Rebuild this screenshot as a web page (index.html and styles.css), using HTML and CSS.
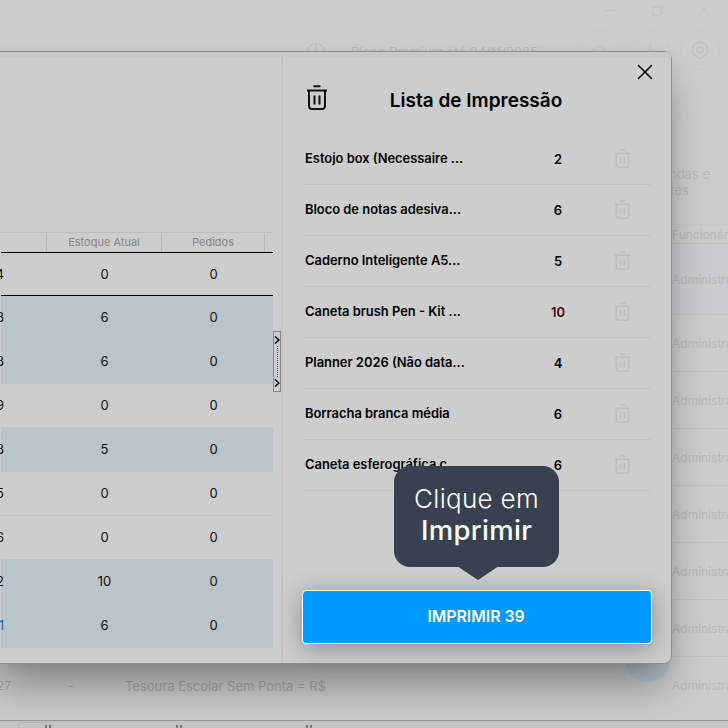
FILE: index.html
```html
<!DOCTYPE html>
<html lang="pt-BR">
<head>
<meta charset="utf-8">
<title>Lista de Impressão</title>
<link rel="stylesheet" href="styles.css">
</head>
<body>
<svg class="defs" width="0" height="0" aria-hidden="true">
  <symbol id="trash" viewBox="0 0 22 25">
    <path d="M7.5 1.2h7M1 5.5h20M3 5.5V21a3 3 0 0 0 3 3h10a3 3 0 0 0 3-3V5.500M8.500 10.500v9M13.500 10.500v9" fill="none" stroke="currentColor" stroke-width="2"/>
  </symbol>
</svg>

<div class="app">
  <div class="winbar">
    <span class="win-min"></span>
    <svg class="win-max" width="11" height="11" viewBox="0 0 11 11"><path d="M.5 2.500h8v8h-8zM2.500 2.500V.5h8v8H8.500" fill="none" stroke="#c2c2c2"/></svg>
    <svg class="win-close" width="12" height="12" viewBox="0 0 12 12"><path d="M1 1l10 10M11 1L1 11" stroke="#c2c2c2" fill="none"/></svg>
  </div>
  <div class="toolbar">
    <svg class="net" width="20" height="20" viewBox="0 0 20 20"><circle cx="10" cy="10" r="8.500" fill="none" stroke="#b8b8b8"/><path d="M10 2v8M10 10l-7 5M10 10l7 5" stroke="#b8b8b8"/></svg>
    <span class="plan">Plano Premium até 04/11/2025</span>
    <span class="tool-circle">
      <svg class="tool-icon" width="20" height="20" viewBox="0 0 20 20"><path d="M3 14a4 4 0 0 1 1-7.500 6 6 0 0 1 11 1 3.500 3.500 0 0 1 1 6.500" fill="none" stroke="#c4c4c4" stroke-width="1.500"/></svg>
    </span>
    <span class="tool-circle">
      <svg class="tool-icon" width="20" height="20" viewBox="0 0 20 20"><path d="M10 2c-1 3-3 5-3 9h6c0-4-2-6-3-9z" fill="none" stroke="#c4c4c4" stroke-width="1.500"/></svg>
    </span>
    <span class="tool-circle">
      <svg width="20" height="20" viewBox="0 0 20 20"><path d="M10 1.500l7 4.200v8.600l-7 4.200-7-4.200V5.700z" fill="none" stroke="#c0c0c0" stroke-width="1.500" stroke-linejoin="round"/><circle cx="10" cy="10" r="3" fill="none" stroke="#c0c0c0" stroke-width="1.500"/></svg>
    </span>
  </div>
  <div class="bg-heading"><span>Comandas e</span><span>Gerentes</span></div>
  <div class="bg-row bg-head"><span class="bg-cell">Funcionário</span></div>
  <div class="bg-row bg-tall"><span class="bg-cell">Administrador</span></div>
  <div class="bg-row"><span class="bg-cell">Administrador</span></div>
  <div class="bg-row"><span class="bg-cell">Administrador</span></div>
  <div class="bg-row"><span class="bg-cell">Administrador</span></div>
  <div class="bg-row"><span class="bg-cell">Administrador</span></div>
  <div class="bg-row"><span class="bg-cell">Administrador</span></div>
  <div class="bg-row"><span class="bg-cell">Administrador</span></div>
  <div class="bg-row bg-last">
    <span class="bg-code">27</span>
    <span class="bg-dash">-</span>
    <span class="bg-name">Tesoura Escolar Sem Ponta = R$</span>
    <span class="bg-cell">Administrador</span>
  </div>
  <div class="footer">
    <span class="foot-pill"><span class="foot-mark"></span></span>
    <span class="foot-mark"></span>
    <span class="foot-mark"></span>
  </div>
</div>

<div class="chat-bubble"></div>

<section class="modal">
  <div class="modal-strip"></div>
  <div class="modal-body">
    <div class="left-panel">
      <div class="table">
        <div class="thead">
          <span class="th"></span>
          <span class="th">Estoque Atual</span>
          <span class="th">Pedidos</span>
          <span class="th th-last"></span>
        </div>
        <div class="tr tr-first"><span class="td td-id">34</span><span class="td">0</span><span class="td">0</span></div>
        <div class="tr sel"><span class="td td-id">48</span><span class="td">6</span><span class="td">0</span></div>
        <div class="tr sel"><span class="td td-id">48</span><span class="td">6</span><span class="td">0</span></div>
        <div class="tr"><span class="td td-id">49</span><span class="td">0</span><span class="td">0</span></div>
        <div class="tr sel"><span class="td td-id">38</span><span class="td">5</span><span class="td">0</span></div>
        <div class="tr"><span class="td td-id">35</span><span class="td">0</span><span class="td">0</span></div>
        <div class="tr"><span class="td td-id">36</span><span class="td">0</span><span class="td">0</span></div>
        <div class="tr sel"><span class="td td-id">42</span><span class="td">10</span><span class="td">0</span></div>
        <div class="tr sel"><span class="td td-id td-link">41</span><span class="td">6</span><span class="td">0</span></div>
      </div>
      <div class="splitter">
        <svg width="6" height="8" viewBox="0 0 6 8"><path d="M1 .5L5 4 1 7.500" fill="none" stroke="#000" stroke-width="1.500"/></svg>
        <span class="splitter-dots"></span>
        <svg width="6" height="8" viewBox="0 0 6 8"><path d="M1 .5L5 4 1 7.500" fill="none" stroke="#000" stroke-width="1.500"/></svg>
      </div>
    </div>
    <div class="right-panel">
      <svg class="close" width="16" height="16" viewBox="0 0 16 16"><path d="M1 1l14 14M15 1L1 15" fill="none" stroke="#000" stroke-width="1.500"/></svg>
      <header class="list-head">
        <svg class="trash-main" width="22" height="25"><use href="#trash"/></svg>
        <h1 class="list-title">Lista de Impressão</h1>
      </header>
      <ul class="list">
        <li class="item"><span class="item-name">Estojo box (Necessaire ...</span><span class="item-qty">2</span><svg class="trash-item" width="17" height="19"><use href="#trash"/></svg></li>
        <li class="item"><span class="item-name">Bloco de notas adesiva...</span><span class="item-qty">6</span><svg class="trash-item" width="17" height="19"><use href="#trash"/></svg></li>
        <li class="item"><span class="item-name">Caderno Inteligente A5...</span><span class="item-qty">5</span><svg class="trash-item" width="17" height="19"><use href="#trash"/></svg></li>
        <li class="item"><span class="item-name">Caneta brush Pen - Kit ...</span><span class="item-qty qty-high">10</span><svg class="trash-item" width="17" height="19"><use href="#trash"/></svg></li>
        <li class="item"><span class="item-name">Planner 2026 (Não data...</span><span class="item-qty">4</span><svg class="trash-item" width="17" height="19"><use href="#trash"/></svg></li>
        <li class="item"><span class="item-name">Borracha branca média</span><span class="item-qty">6</span><svg class="trash-item" width="17" height="19"><use href="#trash"/></svg></li>
        <li class="item"><span class="item-name">Caneta esferográfica c...</span><span class="item-qty">6</span><svg class="trash-item" width="17" height="19"><use href="#trash"/></svg></li>
      </ul>
      <button class="print-btn" type="button">IMPRIMIR 39</button>
      <div class="tooltip">
        <span class="tip-light">Clique em</span>
        <span class="tip-strong">Imprimir</span>
      </div>
    </div>
  </div>
</section>
</body>
</html>
```

FILE: styles.css
```css
* { box-sizing: border-box; }
html, body { margin: 0; padding: 0; }
body {
  position: relative;
  width: 728px;
  height: 728px;
  overflow: hidden;
  background: #cccccc;
  font-family: "Inter", "Liberation Sans", sans-serif;
  color: #000;
}
.defs { position: absolute; }

/* dimmed application behind the modal */
.app { display: flex; flex-direction: column; height: 728px; }
.winbar { display: flex; align-items: center; justify-content: flex-end; height: 20px; flex: none; padding-right: 18px; }
.win-min { width: 10px; height: 1px; background: #c2c2c2; margin-right: 38px; }
.win-max { margin-right: 35px; }
.toolbar { display: flex; align-items: center; height: 60px; flex: none; padding: 0 8px 0 306px; }
.net { margin: 4px 25px 0 0; flex: none; }
.plan { font-size: 13px; color: #b6b6b6; margin: 4px auto 0 0; white-space: nowrap; }
.tool-circle { width: 40px; height: 40px; border: 1px solid #c9c9c9; border-radius: 50%; margin-left: 10px; display: flex; align-items: center; justify-content: center; flex: none; }
.tool-icon { margin-top: 6px; }
.bg-heading { display: flex; flex-direction: column; margin: 86px 0 0 633px; height: 58px; font-size: 13px; line-height: 16px; color: #b8b8b8; white-space: nowrap; flex: none; }
.bg-row { display: flex; align-items: center; justify-content: flex-end; height: 57px; border-bottom: 1px solid #c4c0be; flex: none; }
.bg-head { height: 20px; border-top: 1px solid #c8c8c8; border-bottom: 1px solid #bdb9b7; }
.bg-tall { height: 71px; background: #c9cbcc; }
.bg-cell { width: 56px; flex: none; font-size: 12px; color: #b8b8b8; white-space: nowrap; overflow: hidden; }
.bg-last { border-bottom: 0; justify-content: flex-start; }
.bg-code { width: 71px; flex: none; font-size: 12px; color: #a6a6a6; margin-left: -3px; }
.bg-dash { width: 57px; flex: none; font-size: 12px; color: #a6a6a6; }
.bg-name { flex: 1; font-size: 13px; color: #a6a6a6; white-space: nowrap; }
.footer { margin-top: auto; height: 8px; flex: none; display: flex; align-items: flex-end; gap: 124px; padding-left: 18px; border-top: 1px solid #999; background: #c4c4c4; overflow: hidden; }
.foot-pill { display: flex; justify-content: flex-end; align-items: flex-end; width: 34px; height: 6px; border: 1px solid #b8b8b8; border-bottom: 0; border-radius: 5px 5px 0 0; }
.foot-mark { width: 6px; height: 3px; flex: none; border-left: 2px solid #777; border-right: 2px solid #777; }

.chat-bubble { position: absolute; left: 625px; top: 636px; width: 46px; height: 46px; border-radius: 50%; background: #b9c7d1; }

/* modal */
.modal {
  position: absolute;
  left: -10px;
  top: 51px;
  width: 682px;
  height: 613px;
  display: flex;
  flex-direction: column;
  background: #cdcdcd;
  border: 1px solid #8e8e8e;
  border-radius: 8px;
  box-shadow: 0 28px 40px -6px rgba(0, 0, 0, .34), 0 4px 14px rgba(0, 0, 0, .06);
}
.modal-strip { height: 5px; flex: none; background: #c8c8c8; border-radius: 7px 7px 0 0; }
.modal-body { flex: 1; display: flex; min-height: 0; }

.left-panel { position: relative; width: 292px; flex: none; border-right: 2px solid #c3c3c3; padding-top: 175px; }
.table { margin-left: 10px; width: 272px; }
.thead { display: grid; grid-template-columns: 46px 115px 103px 8px; height: 21px; border-top: 1px solid #bdbdbd; border-bottom: 1px solid #000; }
.th { font-size: 11px; line-height: 19px; text-align: center; color: #858585; border-right: 1px solid #b6b6b6; }
.th-last { border-right: 0; }
.tr { display: grid; grid-template-columns: 46px 115px 103px 8px; height: 44px; align-items: center; padding-bottom: 2px; border-bottom: 1px solid #c2c2c2; }
.tr-first { height: 43px; padding-bottom: 0; border-bottom: 1px solid #000; }
.sel { background: #b9c4cb; border-bottom-color: #c2c5c7; }
.td { font-size: 13px; text-align: center; color: #111; }
.td-id { display: flex; justify-content: flex-end; padding-right: 43px; white-space: nowrap; }
.td-link { color: #0a66c2; }
.splitter { position: absolute; left: 282px; top: 274px; width: 8px; height: 61px; display: flex; flex-direction: column; align-items: center; justify-content: space-between; padding: 4px 0; background: #cdcdcd; border: 1px solid #8a8a8a; }
.splitter-dots { flex: 1; width: 0; border-left: 1px dotted #2a5f8a; margin: 2px 0; }

.right-panel { position: relative; flex: 1; min-width: 0; padding: 0 20px; display: flex; flex-direction: column; }
.close { position: absolute; right: 18px; top: 7px; }
.list-head { position: relative; display: flex; justify-content: center; align-items: center; height: 53px; margin-top: 24px; flex: none; }
.trash-main { position: absolute; left: 3px; top: 4px; color: #111; }
.list-title { margin: 0; font-size: 19px; font-weight: 600; line-height: 22px; padding: 0 2px 14px 0; }
.list { list-style: none; margin: 0; padding: 0; width: 347px; flex: none; }
.item { display: grid; grid-template-columns: 228px 50px 1fr; align-items: center; height: 51px; border-bottom: 1px solid #c0c0c0; padding-left: 2px; }
.item-name { font-size: 12.900px; font-weight: 600; white-space: nowrap; overflow: hidden; padding-bottom: 2px; }
.item-qty { font-size: 13px; font-weight: 600; text-align: center; }
.qty-high { color: #4a0808; }
.trash-item { color: #bdbdbd; justify-self: center; margin-left: 12px; margin-bottom: 2px; }
.print-btn {
  margin: auto 0 19px -1px;
  width: 350px;
  height: 54px;
  flex: none;
  padding: 0 2px 2px 0;
  border: 1px solid #fff;
  border-radius: 4px;
  background: #0099ff;
  color: #fff;
  font-family: inherit;
  font-size: 15.800px;
  font-weight: 600;
  box-shadow: 0 4px 24px rgba(0, 0, 0, .32);
}
.tooltip {
  position: absolute;
  left: 111px;
  top: 409px;
  width: 165px;
  height: 101px;
  display: flex;
  flex-direction: column;
  align-items: center;
  justify-content: center;
  padding-bottom: 6px;
  border-radius: 16px;
  background: #374151;
  color: #fff;
}
.tooltip::after {
  content: "";
  position: absolute;
  left: 63px;
  top: 100px;
  border-left: 21px solid transparent;
  border-right: 21px solid transparent;
  border-top: 14px solid #374151;
}
.tip-light { font-size: 26px; font-weight: 300; line-height: 33px; letter-spacing: .3px; }
.tip-strong { font-size: 27.500px; font-weight: 500; line-height: 31px; letter-spacing: .3px; }
```
